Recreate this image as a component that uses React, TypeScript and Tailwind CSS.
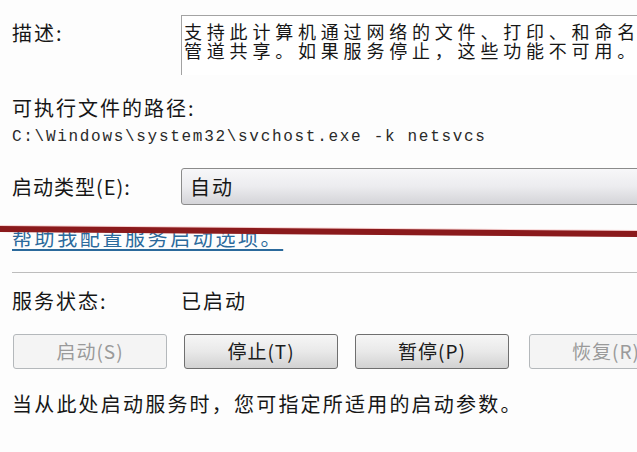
const cjk = "font-['Noto_Sans_CJK_SC','Noto_Sans',sans-serif]";

function Btn({ label, disabled, className = "" }: { label: string; disabled?: boolean; className?: string }) {
  return (
    <div
      className={
        "h-[35px] w-[154px] shrink-0 rounded-[3px] border flex items-center justify-center text-[19px] tracking-[1px] " +
        (disabled
          ? "border-[#b4b8bb] bg-[#f4f4f4] text-[#9a9a9a] "
          : "border-[#6f6f6f] bg-gradient-to-b from-[#f6f6f6] via-[#e9e9e9] to-[#d2d2d2] text-[#1c1c1c] ") +
        className
      }
    >
      {label}
    </div>
  );
}

export default function App() {
  return (
    <div className={`relative w-[637px] h-[452px] overflow-hidden bg-[#fdfdfd] text-[#161616] pl-[12px] ${cjk}`}>
      {/* 描述 */}
      <div className="mt-[15px] flex">
        <div className="w-[169px] shrink-0 pt-[8px] text-[20px] leading-[20px] tracking-[2px]">描述:</div>
        <div className="flex-1 h-[60px] border-t border-l border-[#a3a3a3] bg-white pl-[2px] pt-[6px] text-[18px] leading-[19px] tracking-[4.8px] whitespace-nowrap">
          <div>支持此计算机通过网络的文件、打印、和命名</div>
          <div>管道共享。如果服务停止，这些功能不可用。</div>
        </div>
      </div>

      {/* 可执行文件的路径 */}
      <div className="mt-[23px] text-[20px] leading-[20px] tracking-[2px]">可执行文件的路径:</div>
      <div className="mt-[11px] font-['Liberation_Mono',monospace] text-[16px] leading-[16px] tracking-[1.7px] text-[#2a2a2a] whitespace-nowrap">
        C:\Windows\system32\svchost.exe -k netsvcs
      </div>

      {/* 启动类型 */}
      <div className="mt-[23px] flex items-center">
        <div className="w-[169px] shrink-0 text-[20px] leading-[20px] tracking-[1px]">启动类型(E):</div>
        <div className="h-[37px] w-[480px] shrink-0 rounded-[3px] border border-[#8b8b8b] bg-gradient-to-b from-[#f7f7f9] via-[#ececef] to-[#d4d4d8] flex items-center pl-[8px] text-[20px] tracking-[2px]">
          自动
        </div>
      </div>

      {/* 链接 */}
      <div className="mt-[23px] text-[20px] leading-[20px] tracking-[2.6px] text-[#2b6a9c] underline underline-offset-[3px] whitespace-nowrap">
        帮助我配置服务启动选项。
      </div>

      {/* 分隔线 */}
      <div className="mt-[24px] h-px bg-[#bdbdbd]" />

      {/* 服务状态 */}
      <div className="mt-[18px] flex items-center text-[20px] leading-[20px] tracking-[2px]">
        <div className="w-[169px] shrink-0">服务状态:</div>
        <div>已启动</div>
      </div>

      {/* 按钮 */}
      <div className="mt-[23px] ml-[1px] flex gap-[17px]">
        <Btn label="启动(S)" disabled />
        <Btn label="停止(T)" />
        <Btn label="暂停(P)" />
        <Btn label="恢复(R)" disabled className="ml-[3px]" />
      </div>

      <div className="mt-[25px] text-[20px] leading-[20px] tracking-[2.2px] whitespace-nowrap">
        当从此处启动服务时，您可指定所适用的启动参数。
      </div>

      {/* 红色标注线 */}
      <svg className="absolute left-0 top-[220px]" width="637" height="24" viewBox="0 0 637 24">
        <polygon points="0,5 637,10 637,17 0,12" fill="#f3b5b5" opacity="0.6" />
        <polygon points="0,6 637,11 637,17 0,12" fill="#8a1a1c" />
      </svg>
    </div>
  );
}
